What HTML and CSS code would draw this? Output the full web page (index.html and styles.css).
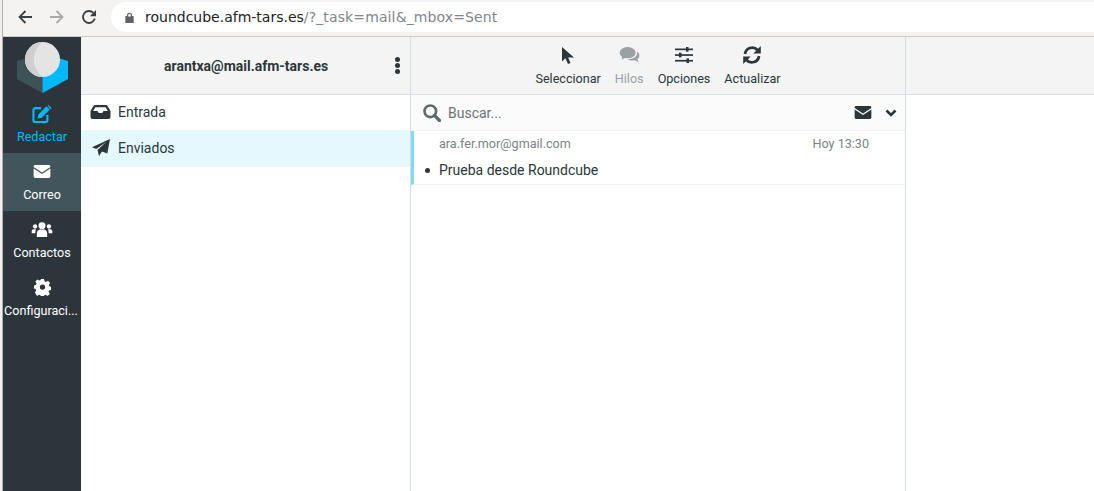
FILE: index.html
```html
<!DOCTYPE html>
<html lang="es">
  <head>
    <meta charset="UTF-8" />
    <title>Roundcube Webmail :: Enviados</title>
    <link rel="stylesheet" href="styles.css">
  </head>
  <body>
    <header class="browser">
      <svg class="nav-btn" viewBox="0 0 16 16"><path d="M15 8H2.500M8.500 2 2.500 8l6 6" fill="none" stroke="#3c4043" stroke-width="1.800"/></svg>
      <svg class="nav-btn" viewBox="0 0 16 16"><path d="M1 8h12.500M7.500 2l6 6-6 6" fill="none" stroke="#a8a9aa" stroke-width="1.800"/></svg>
      <svg class="nav-btn" viewBox="0 0 16 16"><path d="M13.800 9.500A6 6 0 1 1 12.300 3.800" fill="none" stroke="#3c4043" stroke-width="1.800"/><path d="M15 1v6.200H8.800z" fill="#3c4043"/></svg>
      <div class="omnibox">
        <svg class="lock" viewBox="0 0 10 12"><path d="M1 5h8v7H1zM2.800 5V3.400a2.200 2.200 0 0 1 4.400 0V5" fill="#5f6368" stroke="#5f6368" stroke-width="1.200" stroke-linejoin="round"/><path d="M3.600 5V3.400a1.400 1.400 0 0 1 2.800 0V5z" fill="#fff"/></svg>
        <span class="host">roundcube.afm-tars.es</span><span class="path">/?_task=mail&amp;_mbox=Sent</span>
      </div>
    </header>

    <div class="app">
      <nav class="rail">
        <div class="logo">
          <svg viewBox="0 0 52 52" width="52" height="52">
            <path d="M1 19 11 16 26.500 35v16L1 37z" fill="#3d5257"/>
            <path d="M52 19 42 16 26.500 35v16L52 37z" fill="#00b9ff"/>
            <circle cx="26.500" cy="17.500" r="17.500" fill="#e4e4e4"/>
            <path d="M26.500 0a17.500 17.500 0 0 0 0 35A22 22 0 0 1 26.500 0z" fill="#cfcfcf"/>
          </svg>
        </div>
        <a class="rail-item compose">
          <svg viewBox="0 0 22 20" width="20" height="18"><path d="M10 3.500H3.500a2 2 0 0 0-2 2V17a2 2 0 0 0 2 2H15a2 2 0 0 0 2-2v-6" fill="none" stroke="#00b9ff" stroke-width="2.400"/><path d="M7 10.500 16 1.500l3.600 3.600-9 9L6 15zM17.200.5l1-.5 3.400 3.400-1 1.200z" fill="#00b9ff"/></svg>
          <span>Redactar</span>
        </a>
        <a class="rail-item selected">
          <svg viewBox="0 0 18 14" width="18" height="13"><path d="M1.500 0h15A1.500 1.500 0 0 1 18 1.500v.6L9 8 0 2.100v-.6A1.500 1.500 0 0 1 1.500 0zM0 3.900 9 9.800l9-5.900v8.600a1.500 1.500 0 0 1-1.500 1.500h-15A1.500 1.500 0 0 1 0 12.500z" fill="#fff"/></svg>
          <span>Correo</span>
        </a>
        <a class="rail-item">
          <svg viewBox="0 0 22 16" width="22" height="15"><g fill="#fff"><circle cx="11" cy="4" r="3.700"/><path d="M5.500 16v-3.500C5.500 9.500 7.500 8 9 8h4c1.500 0 3.500 1.500 3.500 4.500V16z"/><circle cx="3.600" cy="4.800" r="2.300"/><circle cx="18.400" cy="4.800" r="2.300"/><path d="M0 12v-2.200C0 8.500 1 7.600 2.200 7.600h2.400C3.900 9 3.900 10.500 3.900 12zM22 12v-2.200c0-1.300-1-2.200-2.200-2.200h-2.400c.7 1.400.7 2.900.7 4.400z"/></g></svg>
          <span>Contactos</span>
        </a>
        <a class="rail-item settings">
          <svg viewBox="0 0 18 18" width="17" height="17"><path fill="#fff" fill-rule="evenodd" d="M7.400 0h3.200l.5 2.500 1.500.7 2.200-1.300 2.200 2.300-1.300 2.100.7 1.600 2 .5v3.200l-2.400.5-.6 1.500 1.300 2.200-2.200 2.200-2.200-1.300-1.500.6-.5 2.400H7.400l-.5-2.400-1.500-.6-2.200 1.300L1 14.300l1.300-2.200-.6-1.500L0 10.100V6.900l2.100-.5.600-1.600L1.400 2.700 3.600.4l2.200 1.300 1.200-.6zM9 5.700a2.800 2.800 0 1 0 0 5.600 2.800 2.800 0 0 0 0-5.600z"/></svg>
          <span>Configuraci...</span>
        </a>
      </nav>

      <section class="folders">
        <div class="bar account">
          <span class="username">arantxa@mail.afm-tars.es</span>
          <span class="kebab"><i></i><i></i><i></i></span>
        </div>
        <ul class="folder-list">
          <li class="folder">
            <svg viewBox="0 0 20 14" width="21" height="14"><path fill="#2c363a" fill-rule="evenodd" d="M4.500 0h11c.7 0 1.200.3 1.600.9L20 6v6a2 2 0 0 1-2 2H2a2 2 0 0 1-2-2V6L2.900.9C3.300.3 3.800 0 4.500 0zM4.800 2.200 2.700 6H7l1.200 2h3.600L13 6h4.300l-2.100-3.800z"/></svg>
            <span>Entrada</span>
          </li>
          <li class="folder selected">
            <svg class="sent-icon" viewBox="0 0 18 17" width="18" height="17"><path fill="#2c363a" d="M18 0 15.300 14.500 10 12.400 7 17l-1.500-6L14 3 4.300 10 0 8.300z"/></svg>
            <span>Enviados</span>
          </li>
        </ul>
      </section>

      <section class="messages">
        <div class="bar toolbar">
          <a class="tool">
            <svg viewBox="0 0 12 17" width="12" height="17"><path fill="#2c363a" d="M0 0v14.500l3.400-3.300L6 17l2.500-1.100-2.400-5.400H12z"/></svg>
            <span>Seleccionar</span>
          </a>
          <a class="tool disabled">
            <svg viewBox="0 0 21 17" width="21" height="16"><g fill="#9ba0a2"><ellipse cx="8.500" cy="6" rx="8.500" ry="6"/><path d="M3 9.500 2 13.500 7 11z"/><path d="M18.500 4.800c1.600 1.100 2.500 2.600 2.500 4.200 0 1.500-.8 2.800-2 3.800l1 3.200-3.800-2c-1 .3-2 .4-3 .4-1.800 0-3.400-.5-4.600-1.400 5.500.3 11-3 9.900-8.200z"/></g></svg>
            <span>Hilos</span>
          </a>
          <a class="tool">
            <svg viewBox="0 0 18 16" width="18" height="16"><g fill="#2c363a"><rect y="1.500" width="18" height="1.700"/><rect y="7.200" width="18" height="1.700"/><rect y="12.900" width="18" height="1.700"/><rect x="11" y="0" width="2.500" height="4.700"/><rect x="4" y="5.700" width="2.500" height="4.700"/><rect x="11.500" y="11.400" width="2.500" height="4.600"/></g></svg>
            <span>Opciones</span>
          </a>
          <a class="tool">
            <svg viewBox="0 0 18 18" width="18" height="18"><path fill="none" stroke="#2c363a" stroke-width="2.800" d="M2 8a7.200 7.200 0 0 1 12.500-4M16 10a7.200 7.200 0 0 1-12.500 4"/><path fill="#2c363a" d="M17.800 0v7.500h-7.500zM.2 18v-7.500h7.500z"/></svg>
            <span>Actualizar</span>
          </a>
        </div>
        <div class="searchbar">
          <svg viewBox="0 0 18 18" width="18" height="18"><circle cx="7.300" cy="7.300" r="5.800" fill="none" stroke="#5f6a6e" stroke-width="2.600"/><path d="M11.500 11.500 16.500 16.500" stroke="#5f6a6e" stroke-width="3.200" stroke-linecap="round"/></svg>
          <span class="placeholder">Buscar...</span>
          <svg class="envelope" viewBox="0 0 18 14" width="18" height="13"><path d="M1.500 0h15A1.500 1.500 0 0 1 18 1.500v.6L9 8 0 2.100v-.6A1.500 1.500 0 0 1 1.500 0zM0 3.900 9 9.800l9-5.900v8.600a1.500 1.500 0 0 1-1.500 1.500h-15A1.500 1.500 0 0 1 0 12.500z" fill="#2c363a"/></svg>
          <svg viewBox="0 0 12 8" width="12" height="8"><path d="M1.500 1.500 6 6l4.500-4.500" fill="none" stroke="#2c363a" stroke-width="2.600"/></svg>
        </div>
        <div class="message">
          <div class="msg-top">
            <span class="from">ara.fer.mor@gmail.com</span>
            <span class="date">Hoy 13:30</span>
          </div>
          <div class="subject"><i class="dot"></i>Prueba desde Roundcube</div>
        </div>
      </section>

      <section class="preview">
        <div class="bar"></div>
      </section>
    </div>
  </body>
</html>
```

FILE: styles.css
```css
* {
  margin: 0;
  padding: 0;
  box-sizing: border-box;
}

html {
  height: 100%;
  background: #f2f0ee;
}

body {
  display: flex;
  flex-direction: column;
  height: 100%;
  margin-left: 2px;
  overflow: hidden;
  background: #fff;
  border-left: 1px solid #b5aea8;
  color: #2c363a;
  font-family: Roboto, sans-serif;
  font-size: 14px;
}

svg {
  display: block;
  flex: none;
}

/* Browser chrome */
.browser {
  display: flex;
  align-items: center;
  height: 37px;
  padding: 0 0 2px 14px;
  background: #f4f3f2;
  border-bottom: 1px solid #d3c9c2;
}

.nav-btn {
  width: 16px;
  height: 16px;
  margin-right: 16px;
}

.omnibox {
  display: flex;
  align-items: center;
  flex: 1;
  height: 30px;
  margin-left: -2px;
  padding-left: 14px;
  background: #fff;
  border-radius: 15px 0 0 15px;
  font-family: "DejaVu Sans", sans-serif;
  font-size: 14px;
}

.lock {
  width: 9px;
  height: 11px;
  margin-right: 11px;
}

.host {
  color: #202124;
}

.path {
  color: #80868b;
  letter-spacing: 0.12px;
}

/* Layout */
.app {
  display: flex;
  flex: 1;
  min-height: 0;
}

.bar {
  height: 58px;
  background: #f4f4f4;
  border-bottom: 1px solid #d4dfe3;
}

/* Left rail */
.rail {
  display: flex;
  flex-direction: column;
  width: 78px;
  background: #2c363a;
}

.logo {
  display: flex;
  justify-content: center;
  height: 58px;
  padding-top: 5px;
}

.rail-item {
  display: grid;
  grid-template-rows: 37px 14px;
  justify-items: center;
  align-items: center;
  height: 58px;
  color: #fff;
  font-size: 12.6px;
  white-space: nowrap;
}

.rail-item span {
  margin-top: -6px;
}

.rail-item.settings span {
  margin-right: 2px;
}

.rail-item.compose {
  color: #00b9ff;
}

.rail-item.selected {
  background: #41555c;
}

/* Folders */
.folders {
  width: 330px;
  border-right: 1px solid #d4dfe3;
}

.account {
  display: flex;
  align-items: center;
  padding: 0 10px 0 83px;
}

.username {
  flex: 1;
  font-weight: 700;
  font-size: 14px;
}

.kebab {
  display: flex;
  flex-direction: column;
  gap: 1px;
}

.kebab i {
  width: 5px;
  height: 5px;
  background: #2c363a;
  border-radius: 50%;
}

.folder-list {
  list-style: none;
}

.folder {
  display: flex;
  align-items: center;
  height: 36px;
  padding: 0 0 2px 9px;
  gap: 7px;
  border-bottom: 1px solid #f0f4f5;
}

.folder.selected {
  background: #e4f8fd;
}

.sent-icon {
  margin: 0 1px 0 2px;
}

/* Message list */
.messages {
  width: 495px;
  border-right: 1px solid #d4dfe3;
}

.toolbar {
  display: flex;
  justify-content: center;
}

.tool {
  display: grid;
  grid-template-rows: 24px 15px;
  justify-items: center;
  align-items: center;
  row-gap: 4px;
  padding: 6px 7px 0;
  font-size: 12.6px;
  color: #2c363a;
}

.tool.disabled {
  color: #9ba0a2;
}

.searchbar {
  display: flex;
  align-items: center;
  height: 36px;
  padding: 0 8px 0 12px;
  background: #fbfbfb;
  border-bottom: 1px solid #eef2f3;
}

.placeholder {
  flex: 1;
  margin-left: 7px;
  color: #6a7478;
}

.envelope {
  margin-right: 13px;
}

.message {
  height: 54px;
  padding: 5px 36px 0 25px;
  border-left: 3px solid #7fdcf7;
  border-bottom: 1px solid #eef2f3;
}

.msg-top {
  display: flex;
  justify-content: space-between;
  font-size: 12.6px;
  color: #7a8387;
}

.subject {
  position: relative;
  margin-top: 11px;
}

.dot {
  position: absolute;
  left: -14px;
  top: 6px;
  width: 5px;
  height: 5px;
  background: #2c363a;
  border-radius: 50%;
}

/* Preview */
.preview {
  flex: 1;
}
```
